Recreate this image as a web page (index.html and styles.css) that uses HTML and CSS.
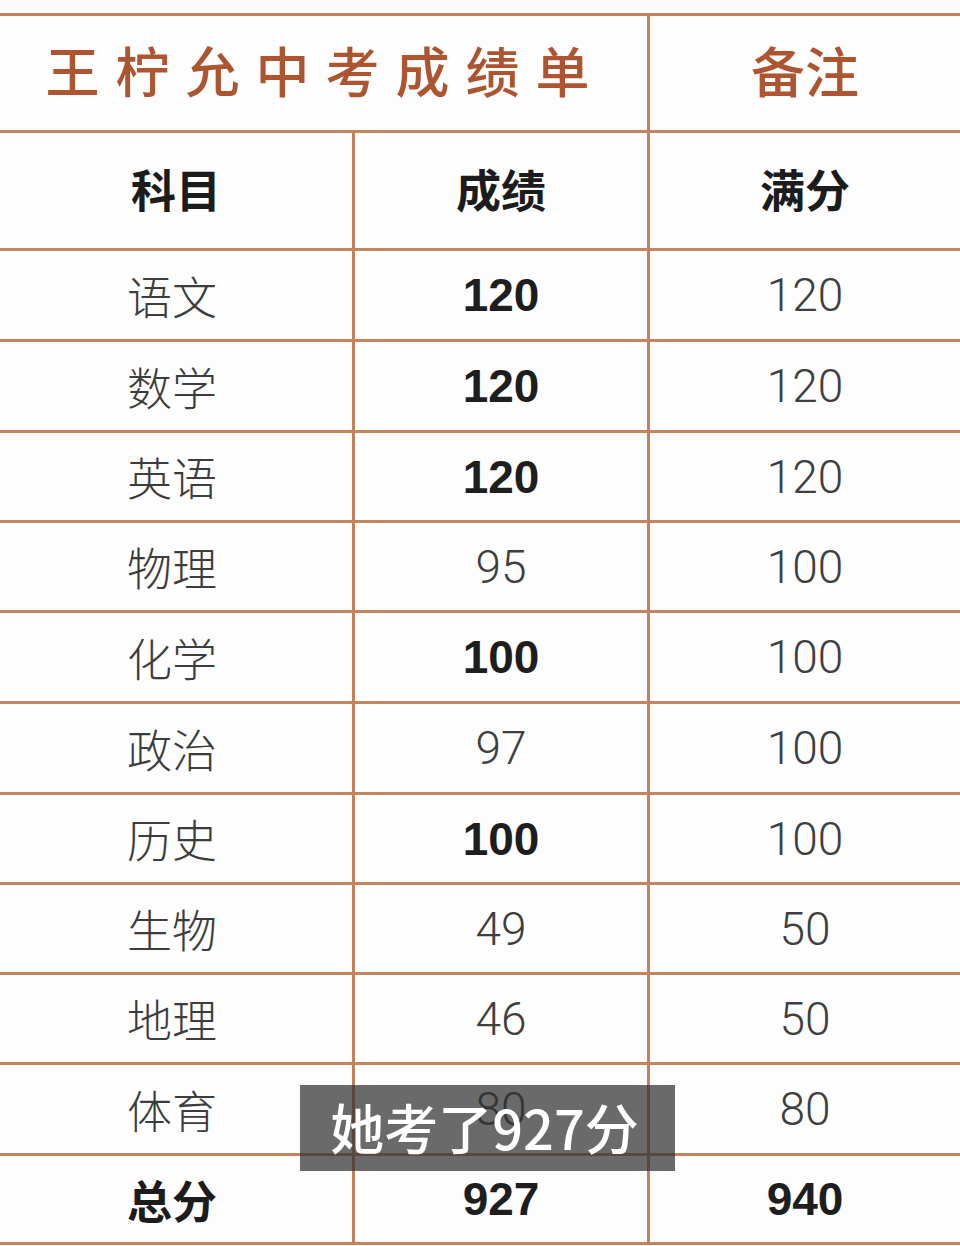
FILE: index.html
```html
<!DOCTYPE html>
<html lang="zh-CN">
<head>
<meta charset="utf-8">
<title>王柠允中考成绩单</title>
<link rel="stylesheet" href="styles.css">
</head>
<body>
<div class="sheet">
  <div class="grid">
    <div class="cell span2 title r-title"><span class="title-text">王柠允中考成绩单</span></div>
    <div class="cell last title r-title">备注</div>

    <div class="cell head r-head">科目</div>
    <div class="cell head r-head">成绩</div>
    <div class="cell last head r-head">满分</div>

    <div class="cell subj h91">语文</div>
    <div class="cell num bold h91">120</div>
    <div class="cell last num h91">120</div>

    <div class="cell subj h91">数学</div>
    <div class="cell num bold h91">120</div>
    <div class="cell last num h91">120</div>

    <div class="cell subj h90">英语</div>
    <div class="cell num bold h90">120</div>
    <div class="cell last num h90">120</div>

    <div class="cell subj h90">物理</div>
    <div class="cell num h90">95</div>
    <div class="cell last num h90">100</div>

    <div class="cell subj h91">化学</div>
    <div class="cell num bold h91">100</div>
    <div class="cell last num h91">100</div>

    <div class="cell subj h91">政治</div>
    <div class="cell num h91">97</div>
    <div class="cell last num h91">100</div>

    <div class="cell subj h90">历史</div>
    <div class="cell num bold h90">100</div>
    <div class="cell last num h90">100</div>

    <div class="cell subj h90">生物</div>
    <div class="cell num h90">49</div>
    <div class="cell last num h90">50</div>

    <div class="cell subj h90">地理</div>
    <div class="cell num h90">46</div>
    <div class="cell last num h90">50</div>

    <div class="cell subj h91">体育</div>
    <div class="cell num h91">80</div>
    <div class="cell last num h91">80</div>

    <div class="cell subj total h89">总分</div>
    <div class="cell num bold h89">927</div>
    <div class="cell last num bold h89">940</div>
  </div>
  <div class="caption">她考了927分</div>
</div>
</body>
</html>
```

FILE: styles.css
```css
* { box-sizing: border-box; }

html, body {
  margin: 0;
  padding: 0;
  background: #fcfbfb;
}

body {
  width: 960px;
  height: 1246px;
  overflow: hidden;
  font-family: "Noto Sans CJK SC", "Noto Sans", sans-serif;
}

.sheet {
  position: relative;
  margin-top: 13px;
  border-top: 3px solid #c4825c;
}

.grid {
  display: grid;
  grid-template-columns: 355px 295px 310px;
}

.cell {
  display: flex;
  align-items: center;
  justify-content: center;
  border-right: 3px solid #c4805a;
  border-bottom: 3px solid #c4845e;
  background: #fdfdfd;
}

.cell.last { border-right: none; }

.span2 { grid-column: span 2; }

.r-title { height: 117px; }
.r-head { height: 118px; }
.h91 { height: 91px; }
.h90 { height: 90px; }
.h89 { height: 89px; }

.title {
  color: #ad5530;
  font-size: 54px;
  font-weight: 500;
  padding-bottom: 8px;
}

.title-text {
  letter-spacing: 16px;
  margin-right: -4px;
  padding-left: 0;
}

.head {
  color: #1c1c1c;
  font-size: 45px;
  font-weight: 700;
  padding-bottom: 4px;
}

.subj {
  color: #3c3c3c;
  font-size: 45px;
  font-weight: 300;
  padding-right: 8px;
}

.subj.total {
  color: #1c1c1c;
  font-weight: 700;
}

.num {
  font-family: "Roboto", "Liberation Sans", sans-serif;
  font-size: 46px;
  font-weight: 300;
  color: #3f3f3f;
}

.num.bold {
  font-family: "Liberation Sans", "Roboto", sans-serif;
  font-weight: 700;
  color: #1e1e1e;
}

.caption {
  position: absolute;
  left: 300px;
  top: 1069px;
  width: 375px;
  height: 86px;
  background: rgba(48, 48, 48, 0.72);
  color: #ffffff;
  font-size: 54px;
  font-weight: 500;
  display: flex;
  align-items: center;
  justify-content: center;
  padding-right: 6px;
  padding-bottom: 4px;
}
```
